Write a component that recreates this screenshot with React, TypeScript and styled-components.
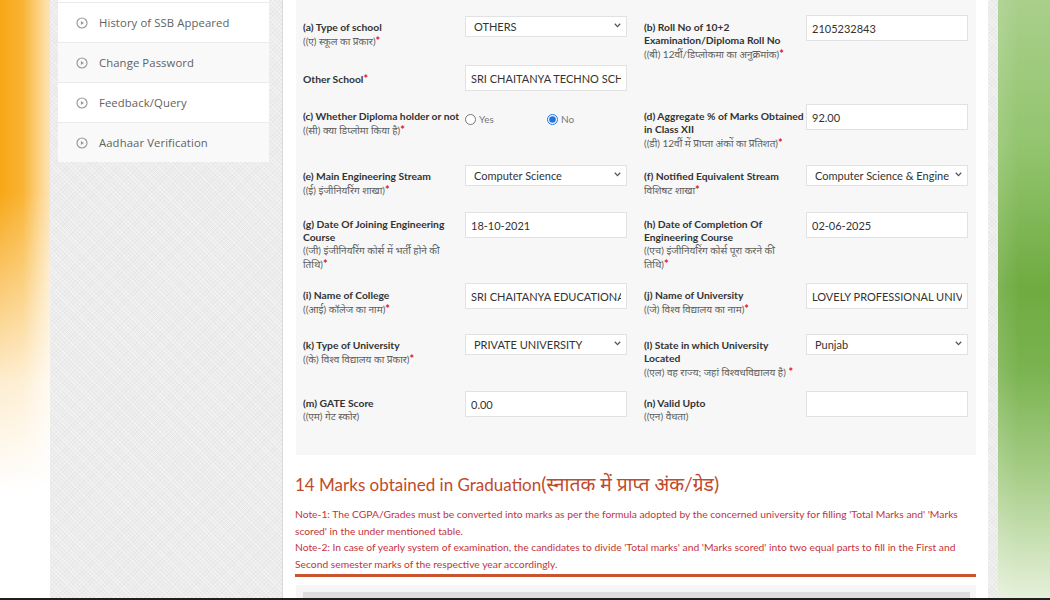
import React from "react";
import styled, { createGlobalStyle } from "styled-components";

const Global = createGlobalStyle`
  html, body { margin: 0; padding: 0; background: #fff; }
  body { font-family: Lato, "Noto Sans", sans-serif; }
  * { box-sizing: border-box; }
`;

const Page = styled.div`
  width: 1050px;
  height: 600px;
  display: flex;
  flex-direction: column;
  overflow: hidden;
  background: #fff;
`;

const Stage = styled.div`
  flex: 1;
  min-height: 0;
  display: flex;
`;

const BottomBar = styled.div`
  height: 2px;
  background: #1f1f1f;
`;

const OrangeEdge = styled.div`
  width: 50px;
  background:
    linear-gradient(to bottom, rgba(255,255,255,0) 0%, rgba(255,255,255,0) 32%, rgba(255,255,255,0.8) 64%, #fff 82%),
    linear-gradient(to right, #f7a717 0%, #f9b332 45%, #fcd48a 80%, #fde4b6 100%);
`;

const GreenEdge = styled.div`
  width: 52px;
  background:
    linear-gradient(to right, rgba(255,255,255,0.12), rgba(255,255,255,0) 40%),
    linear-gradient(to bottom, #a9cf8b 0%, #92c46d 25%, #6fab41 48%, #7ab350 62%, #a8ce89 80%, #e6f0da 100%);
`;

const Shell = styled.div`
  width: 948px;
  display: flex;
  padding-right: 10px;
  background-color: #ececec;
  background-image:
    repeating-linear-gradient(45deg, rgba(255,255,255,0.35) 0 1px, transparent 1px 3px),
    repeating-linear-gradient(-45deg, rgba(0,0,0,0.025) 0 1px, transparent 1px 3px);
`;

const Sidebar = styled.aside`
  width: 233px;
  padding-left: 8px;
  border-right: 1px solid #dadada;
`;

const MenuCard = styled.nav`
  width: 211px;
  padding-top: 2px;
  background: #fff;
`;

const MenuItem = styled.div<{ $alt?: boolean }>`
  height: 40px;
  border-top: 1px solid #ebebeb;
  display: flex;
  align-items: center;
  gap: 11px;
  padding-left: 18px;
  background: ${(p) => (p.$alt ? "#f9f9f9" : "#fff")};
  font-family: "Open Sans", sans-serif;
  font-size: 11.3px;
  letter-spacing: 0.1px;
  color: #626262;
`;

const Main = styled.main`
  width: 705px;
  background: #fff;
  padding: 0 12px 0 13px;
  overflow: hidden;
`;

const Panel = styled.section`
  width: 680px;
  background: #f7f7f7;
  padding: 15px 8px 32px 7px;
`;

const FormRow = styled.div<{ $gap: number }>`
  display: grid;
  grid-template-columns: 324px 324px;
  column-gap: 17px;
  align-items: start;
  margin-bottom: ${(p) => p.$gap}px;
`;

const Stack = styled.div`
  display: flex;
  flex-direction: column;
  gap: 18px;
`;

const Field = styled.div`
  display: grid;
  grid-template-columns: 162px 162px;
  align-items: start;
`;

const Label = styled.div<{ $pt?: number }>`
  padding-top: ${(p) => p.$pt ?? 6}px;
  font-size: 10.3px;
  line-height: 13px;
`;

const Eng = styled.span`
  display: block;
  height: 13px;
  white-space: nowrap;
  font-weight: 700;
  color: #333;
`;

const Hin = styled.span`
  display: block;
  height: 13px;
  white-space: nowrap;
  font-weight: 400;
  color: #5e5e5e;
  font-size: 10px;
`;

const Req = styled.span`
  color: #e0141e;
  font-weight: 700;
  font-size: 11px;
`;

const TextBox = styled.input`
  width: 162px;
  height: 26px;
  border: 1px solid #e2e2e2;
  background: #fff;
  padding: 0 5px;
  font-family: Lato, sans-serif;
  font-size: 11px;
  color: #333;
  outline: none;
`;

const SelectWrap = styled.div`
  position: relative;
  width: 162px;
  height: 21px;
`;

const Select = styled.select`
  appearance: none;
  width: 100%;
  height: 21px;
  border: 1px solid #e2e2e2;
  background: #fff;
  padding: 0 18px 0 8px;
  font-family: Lato, sans-serif;
  font-size: 11px;
  color: #333;
  outline: none;
`;

const Chevron = styled.svg`
  position: absolute;
  right: 6px;
  top: 8px;
  pointer-events: none;
`;

const Radios = styled.div`
  display: grid;
  grid-template-columns: 82px 80px;
  padding-top: 9px;
`;

const RadioOpt = styled.label`
  display: flex;
  align-items: center;
  gap: 3px;
  font-size: 10px;
  color: #777;
  input {
    margin: 0;
    width: 11px;
    height: 11px;
    accent-color: #1f74e0;
  }
`;

const Heading = styled.h2`
  margin: 18px 0 0 -1px;
  font-family: Lato, "Noto Sans", sans-serif;
  font-size: 17px;
  line-height: 22px;
  height: 22px;
  font-weight: 400;
  color: #c04b2c;
  white-space: nowrap;
`;

const HeadHindi = styled.span`
  font-size: 19.3px;
  font-weight: 400;
`;

const Notes = styled.div`
  margin: 11px 0 0 -1px;
  font-size: 10.3px;
  line-height: 16.5px;
  color: #c4343a;
`;

const NoteLine = styled.div`
  white-space: nowrap;
  height: 16.5px;
`;

const Rule = styled.div`
  width: 681px;
  margin-left: -1px;
  margin-top: 2px;
  height: 3px;
  background: #c9542d;
`;

const TableWrap = styled.div`
  margin-top: 8px;
  width: 680px;
  height: 30px;
  background: #f6f6f6;
  padding: 7px 6px 0 7px;
`;

const TableHead = styled.div`
  height: 20px;
  background: #dedede;
`;

const PlayIcon = () => (
  <svg width="12" height="12" viewBox="0 0 12 12">
    <circle cx="6" cy="6" r="5" fill="none" stroke="#9b9b9b" strokeWidth="1.2" />
    <path d="M4.9 3.9 L8 6 L4.9 8.1 Z" fill="#9b9b9b" />
  </svg>
);

const Sel = ({ value }: { value: string }) => (
  <SelectWrap>
    <Select defaultValue={value}>
      <option>{value}</option>
    </Select>
    <Chevron width="7" height="5" viewBox="0 0 7 5">
      <path d="M0.8 0.8 L3.5 3.6 L6.2 0.8" fill="none" stroke="#555" strokeWidth="1.3" />
    </Chevron>
  </SelectWrap>
);

const Txt = ({ value }: { value: string }) => <TextBox readOnly value={value} />;

type LabelProps = { en: string[]; hi?: string[]; req?: boolean; pt?: number; reqSpace?: boolean };

const FieldLabel = ({ en, hi, req, pt, reqSpace }: LabelProps) => (
  <Label $pt={pt}>
    {en.map((l, i) => (
      <Eng key={i}>
        {l}
        {!hi && req && i === en.length - 1 ? <Req>*</Req> : null}
      </Eng>
    ))}
    {hi &&
      hi.map((l, i) => (
        <Hin key={i}>
          {l}
          {req && i === hi.length - 1 ? (
            <>
              {reqSpace ? " " : ""}
              <Req>*</Req>
            </>
          ) : null}
        </Hin>
      ))}
  </Label>
);

const menu = ["History of SSB Appeared", "Change Password", "Feedback/Query", "Aadhaar Verification"];

export default function App() {
  return (
    <>
      <Global />
      <Page>
        <Stage>
          <OrangeEdge />
          <Shell>
            <Sidebar>
              <MenuCard>
                {menu.map((m, i) => (
                  <MenuItem key={m} $alt={i % 2 === 1}>
                    <PlayIcon />
                    {m}
                  </MenuItem>
                ))}
              </MenuCard>
            </Sidebar>
            <Main>
              <Panel>
                <FormRow $gap={13}>
                  <Stack>
                    <Field>
                      <FieldLabel en={["(a) Type of school"]} hi={["((ए) स्कूल का प्रकार)"]} req />
                      <Sel value="OTHERS" />
                    </Field>
                    <Field>
                      <FieldLabel en={["Other School"]} req pt={7} />
                      <Txt value="SRI CHAITANYA TECHNO SCHOOL" />
                    </Field>
                  </Stack>
                  <Field>
                    <FieldLabel
                      en={["(b) Roll No of 10+2", "Examination/Diploma Roll No"]}
                      hi={["((बी) 12वीं/डिप्लोकमा का अनुक्रमांक)"]}
                      req
                    />
                    <Txt value="2105232843" />
                  </Field>
                </FormRow>

                <FormRow $gap={15}>
                  <Field>
                    <FieldLabel en={["(c) Whether Diploma holder or not"]} hi={["((सी) क्या डिप्लोमा किया है)"]} req />
                    <Radios>
                      <RadioOpt>
                        <input type="radio" name="diploma" />
                        Yes
                      </RadioOpt>
                      <RadioOpt>
                        <input type="radio" name="diploma" defaultChecked />
                        No
                      </RadioOpt>
                    </Radios>
                  </Field>
                  <Field>
                    <FieldLabel
                      en={["(d) Aggregate % of Marks Obtained", "in Class XII"]}
                      hi={["((डी) 12वीं में प्राप्ता अंकों का प्रतिशत)"]}
                      req
                    />
                    <Txt value="92.00" />
                  </Field>
                </FormRow>

                <FormRow $gap={16}>
                  <Field>
                    <FieldLabel en={["(e) Main Engineering Stream"]} hi={["((ई) इंजीनियरिंग शाखा)"]} req />
                    <Sel value="Computer Science" />
                  </Field>
                  <Field>
                    <FieldLabel en={["(f) Notified Equivalent Stream"]} hi={["विशिषट शाखा"]} req />
                    <Sel value="Computer Science & Engineering" />
                  </Field>
                </FormRow>

                <FormRow $gap={13}>
                  <Field>
                    <FieldLabel
                      en={["(g) Date Of Joining Engineering", "Course"]}
                      hi={["((जी) इंजीनियरिंग कोर्स में भर्ती होने की", "तिथि)"]}
                      req
                    />
                    <Txt value="18-10-2021" />
                  </Field>
                  <Field>
                    <FieldLabel
                      en={["(h) Date of Completion Of", "Engineering Course"]}
                      hi={["((एच) इंजीनियरिंग कोर्स पूरा करने की", "तिथि)"]}
                      req
                    />
                    <Txt value="02-06-2025" />
                  </Field>
                </FormRow>

                <FormRow $gap={18}>
                  <Field>
                    <FieldLabel en={["(i) Name of College"]} hi={["((आई) कॉलेज का नाम)"]} req />
                    <Txt value="SRI CHAITANYA EDUCATIONAL SOCIETY" />
                  </Field>
                  <Field>
                    <FieldLabel en={["(j) Name of University"]} hi={["((जे) विश्व विद्यालय का नाम)"]} req />
                    <Txt value="LOVELY PROFESSIONAL UNIVERSITY" />
                  </Field>
                </FormRow>

                <FormRow $gap={13}>
                  <Field>
                    <FieldLabel en={["(k) Type of University"]} hi={["((के) विश्व विद्यालय का प्रकार)"]} req />
                    <Sel value="PRIVATE UNIVERSITY" />
                  </Field>
                  <Field>
                    <FieldLabel
                      en={["(l) State in which University", "Located"]}
                      hi={["((एल) वह राज्य; जहां विश्वधविद्यालय है)"]}
                      req
                      reqSpace
                    />
                    <Sel value="Punjab" />
                  </Field>
                </FormRow>

                <FormRow $gap={0}>
                  <Field>
                    <FieldLabel en={["(m) GATE Score"]} hi={["((एम) गेट स्कोर)"]} />
                    <Txt value="0.00" />
                  </Field>
                  <Field>
                    <FieldLabel en={["(n) Valid Upto"]} hi={["((एन) वैधता)"]} />
                    <Txt value="" />
                  </Field>
                </FormRow>
              </Panel>

              <Heading>
                14 Marks obtained in Graduation<HeadHindi>(स्नातक में प्राप्त अंक/ग्रेड)</HeadHindi>
              </Heading>
              <Notes>
                <NoteLine>
                  Note-1: The CGPA/Grades must be converted into marks as per the formula adopted by the concerned university for filling 'Total Marks and' 'Marks
                </NoteLine>
                <NoteLine>scored' in the under mentioned table.</NoteLine>
                <NoteLine>
                  Note-2: In case of yearly system of examination, the candidates to divide 'Total marks' and 'Marks scored' into two equal parts to fill in the First and
                </NoteLine>
                <NoteLine>Second semester marks of the respective year accordingly.</NoteLine>
              </Notes>
              <Rule />
              <TableWrap>
                <TableHead />
              </TableWrap>
            </Main>
          </Shell>
          <GreenEdge />
        </Stage>
        <BottomBar />
      </Page>
    </>
  );
}
